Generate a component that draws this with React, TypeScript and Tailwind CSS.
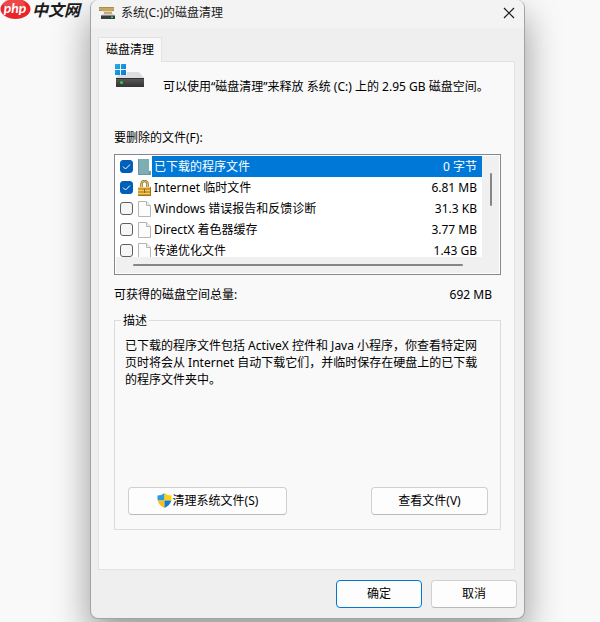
import { useState } from "react";

type FileKind = "folder" | "lock" | "page";

type CleanupItem = {
  id: string;
  name: string;
  size: string;
  kind: FileKind;
  checked: boolean;
};

const initialItems: CleanupItem[] = [
  { id: "programs", name: "已下载的程序文件", size: "0 字节", kind: "folder", checked: true },
  { id: "internet", name: "Internet 临时文件", size: "6.81 MB", kind: "lock", checked: true },
  { id: "feedback", name: "Windows 错误报告和反馈诊断", size: "31.3 KB", kind: "page", checked: false },
  { id: "directx", name: "DirectX 着色器缓存", size: "3.77 MB", kind: "page", checked: false },
  { id: "delivery", name: "传递优化文件", size: "1.43 GB", kind: "page", checked: false },
];

function CleanupIcon() {
  return (
    <svg width="17" height="12" viewBox="0 0 17 12" aria-hidden="true">
      <path d="M0 0h15v4H0z" fill="#c4a765" />
      <path d="M0 0h15v1H0zM0 3h3v1H0zM13 3h2v1h-2z" fill="#a98d4f" />
      <path d="M4 4h9v1H4z" fill="#e6d5a8" />
      <path d="M5 5h8v3H5z" fill="#c8ab68" />
      <path d="M4 7h10l2 2H2z" fill="#d2d4d7" />
      <path d="M2 8.500h14V12H2z" fill="#3a3c3e" />
      <path d="M12 9.500h2V11h-2z" fill="#2fe04a" />
    </svg>
  );
}

function DriveIcon() {
  return (
    <svg width="32" height="26" viewBox="0 0 32 26" aria-hidden="true">
      <defs>
        <linearGradient id="drive" x1="0" y1="0" x2="0" y2="1">
          <stop offset="0" stopColor="#5b5b5b" />
          <stop offset="1" stopColor="#343434" />
        </linearGradient>
        <linearGradient id="win" x1="0" y1="0" x2="1" y2="1">
          <stop offset="0" stopColor="#27aee8" />
          <stop offset="1" stopColor="#0b78cf" />
        </linearGradient>
      </defs>
      <path d="M7 9h18l5 6H2z" fill="#dcdde0" />
      <path d="M2 15h28v9H2z" fill="url(#drive)" />
      <path d="M2 15h28v1H2z" fill="#2e2e2e" />
      <path d="M0 0h13v12H0z" fill="#f9f9f9" />
      <path d="M1 1h5v5H1zM7 1h5v5H7zM1 7h5v5H1zM7 7h5v5H7z" fill="url(#win)" />
      <circle cx="7.500" cy="19.500" r="1.500" fill="#29d83c" />
    </svg>
  );
}

function ShieldIcon() {
  return (
    <svg width="15" height="15" viewBox="0 0 15 15" aria-hidden="true">
      <path d="M7.500 0v7.500H.7Q.3 5 .5 2.500 4.500 2.500 7.500 0z" fill="#2b9be0" />
      <path d="M7.500 0v7.500h6.800q.4-2.500.2-5Q10.500 2.500 7.500 0z" fill="#fdd10b" />
      <path d="M.7 7.500h6.800V15Q2 12.500.7 7.500z" fill="#fcbc12" />
      <path d="M14.300 7.500H7.500V15q5.500-2.500 6.800-7.500z" fill="#1678cf" />
    </svg>
  );
}

function FileIcon({ kind }: { kind: FileKind }) {
  if (kind === "folder") {
    return (
      <svg width="14" height="16" viewBox="0 0 14 16" aria-hidden="true">
        <path d="M0 0h11v12h2v4H0z" fill="#7daeb4" />
        <path d="M.5 0v16M0 15.500h12" stroke="#6799a2" fill="none" />
        <path d="M10.500 16v-3l2-1.500V16z" fill="#6e9aa0" />
      </svg>
    );
  }
  if (kind === "lock") {
    return (
      <svg width="14" height="16" viewBox="0 0 14 16" aria-hidden="true">
        <path d="M3.500 8V4a3 3 0 0 1 6 0V8" stroke="#94732a" strokeWidth="2.600" fill="none" />
        <path d="M3.500 8V4a3 3 0 0 1 6 0V8" stroke="#e0c882" strokeWidth="1" fill="none" />
        <path d="M0 7h13v9H0z" fill="#cf9a2c" />
        <path d="M0 7h13v1H0zM0 10h13v1H0zM0 13h13v1H0z" fill="#f0cd6c" />
        <path d="M0 15h13v1H0zM12 7h1v9h-1z" fill="#a3731a" />
        <path d="M6 9h1v4H6z" fill="#8f661c" />
      </svg>
    );
  }
  return (
    <svg width="14" height="16" viewBox="0 0 14 16" aria-hidden="true">
      <path d="M.5.5h8l4 4v11H.5z" fill="#fcfcfc" stroke="#b5b5b5" />
      <path d="M8.500.5v4h4" fill="#eee" stroke="#b5b5b5" />
    </svg>
  );
}

function SiteMark() {
  return (
    <div className="absolute top-0 left-0 flex h-5 items-center">
      <svg width="32" height="20" viewBox="0 0 32 20" aria-hidden="true">
        <ellipse cx="15.500" cy="9" rx="15" ry="10" fill="#e8262a" />
        <ellipse cx="14" cy="4" rx="11" ry="5" fill="#f3686a" opacity="0.5" />
        <text x="15" y="13" textAnchor="middle" fill="#fff" fontSize="14" fontWeight="700" fontStyle="italic" fontFamily="Lato, sans-serif">
          php
        </text>
      </svg>
      <span className="pr-1 text-[16px] leading-5 font-bold text-[#1c1c1c] italic">中文网</span>
    </div>
  );
}

const buttonClass =
  "flex h-7 items-center justify-center rounded border border-[#d0d0d0] border-b-[#bababa] bg-[#fdfdfd] hover:bg-[#e5f1fb]";

export default function App() {
  const [items, setItems] = useState(initialItems);
  const [selected, setSelected] = useState("programs");

  const toggle = (id: string) => {
    setItems((prev) => prev.map((item) => (item.id === id ? { ...item, checked: !item.checked } : item)));
  };

  return (
    <main className="relative overflow-hidden bg-[#f9f9f9] pr-[75px] pb-1 pl-[90px] font-['Noto_Sans','Noto_Sans_CJK_SC',sans-serif] text-[12px] leading-[17px] text-black">
      <SiteMark />
      <section
        role="dialog"
        aria-labelledby="dialog-title"
        className="rounded-lg border border-t-0 border-[#a3a3a3] bg-[#efefef] shadow-[0_16px_36px_rgba(0,0,0,0.4)]"
      >
        <header className="flex h-7 items-center gap-[5px] rounded-t-lg bg-[#f3f3f3] px-2 pb-[3px]">
          <CleanupIcon />
          <h1 id="dialog-title" className="flex-1 text-[#1a1a1a]">系统(C:)的磁盘清理</h1>
          <button type="button" aria-label="关闭" className="flex h-6 w-3.5 items-center justify-center">
            <svg width="12" height="12" viewBox="0 0 12 12" stroke="#1a1a1a" strokeWidth="1.200" aria-hidden="true">
              <path d="M1 1l10 10M11 1L1 11" />
            </svg>
          </button>
        </header>

        <div className="pt-[9px] pr-[9px] pl-[7px]">
          <div role="tablist" className="flex">
            <button
              type="button"
              role="tab"
              aria-selected="true"
              className="relative -mb-px h-[25px] border border-b-0 border-[#e2e2e2] bg-[#f9f9f9] px-[7px] pb-0.5"
            >
              磁盘清理
            </button>
          </div>

          <div role="tabpanel" className="border border-[#e2e2e2] bg-[#f9f9f9] pt-px pr-[13px] pb-[39px] pl-[15px]">
            <div className="flex gap-[17px]">
              <DriveIcon />
              <p className="pt-[15px]">可以使用“磁盘清理”来释放 系统 (C:) 上的 2.95 GB 磁盘空间。</p>
            </div>

            <h2 className="mt-[34px]">要删除的文件(F):</h2>

            <div className="mt-2 border border-[#828790] bg-white p-px">
              <div className="flex bg-[#f0f0f0]">
                <div className="h-[101px] flex-1 overflow-hidden bg-white">
                  <table className="w-full border-collapse leading-3">
                    <tbody>
                      {items.map((item) => {
                        const active = item.id === selected;
                        return (
                          <tr key={item.id} className="h-[21px]" onClick={() => setSelected(item.id)}>
                            <td className="w-[22px] p-0 pl-1">
                              <span className="relative block size-[13px]">
                                <input
                                  id={item.id}
                                  type="checkbox"
                                  checked={item.checked}
                                  onChange={() => toggle(item.id)}
                                  className="block size-[13px] appearance-none rounded-[3px] border border-[#5f5f5f] bg-[#f6f6f6] checked:border-[#005fb8] checked:bg-[#005fb8]"
                                />
                                {item.checked && (
                                  <svg
                                    className="pointer-events-none absolute inset-0"
                                    width="13"
                                    height="13"
                                    viewBox="0 0 13 13"
                                    fill="none"
                                    stroke="#fff"
                                    aria-hidden="true"
                                  >
                                    <path d="M3 6.500L5.500 9l4.500-4.500" />
                                  </svg>
                                )}
                              </span>
                            </td>
                            <td className="w-[14px] p-0">
                              <FileIcon kind={item.kind} />
                            </td>
                            <td className={active ? "bg-[#0078d7] p-0 pl-0.5 text-white" : "p-0 pl-0.5"}>
                              <label htmlFor={item.id}>{item.name}</label>
                            </td>
                            <td className={active ? "bg-[#0078d7] p-0 pr-[5px] text-right text-white" : "p-0 pr-[5px] text-right"}>
                              {item.size}
                            </td>
                          </tr>
                        );
                      })}
                    </tbody>
                  </table>
                </div>
                <div className="flex w-[17px] pt-[17px] pl-2">
                  <span className="h-[33px] w-0.5 rounded-full bg-[#868686]" />
                </div>
              </div>
              <div className="flex h-4 items-center bg-[#f0f0f0] pr-9 pl-[17px]">
                <span className="h-0.5 w-full rounded-full bg-[#868686]" />
              </div>
            </div>

            <div className="mt-[11px] flex justify-between pr-[9px]">
              <span>可获得的磁盘空间总量:</span>
              <span>692 MB</span>
            </div>

            <fieldset className="mt-[9px] border border-[#dcdcdc] pr-3 pb-[14px] pl-[13px]">
              <legend className="-ml-[7px] px-0.5">描述</legend>
              <p className="-ml-[3px] min-h-[150px] pt-2">
                已下载的程序文件包括 ActiveX 控件和 Java 小程序，你查看特定网页时将会从 Internet
                自动下载它们，并临时保存在硬盘上的已下载的程序文件夹中。
              </p>
              <div className="flex justify-between pt-2">
                <button type="button" className={`${buttonClass} w-[159px] gap-px pb-0.5`}>
                  <ShieldIcon />
                  清理系统文件(S)
                </button>
                <button type="button" className={`${buttonClass} w-[117px] pb-0.5`}>
                  查看文件(V)
                </button>
              </div>
            </fieldset>
          </div>
        </div>

        <footer className="flex justify-end gap-[9px] px-[7px] pt-[10px] pb-[10px]">
          <button type="button" className="flex h-7 w-[86px] items-center justify-center rounded border border-[#0078d4] bg-[#fdfdfd] pb-0.5 hover:bg-[#e5f1fb]">
            确定
          </button>
          <button type="button" className={`${buttonClass} w-[86px] pb-0.5`}>
            取消
          </button>
        </footer>
      </section>
    </main>
  );
}
